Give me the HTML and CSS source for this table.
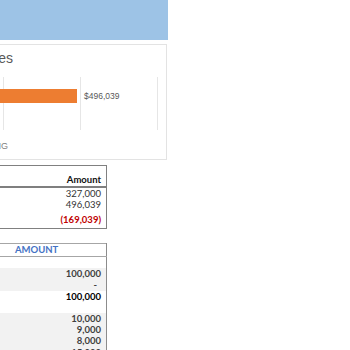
FILE: index.html
```
<!DOCTYPE html>
<html lang="en">
<head>
    <meta charset="UTF-8">
    <meta name="viewport" content="width=device-width, initial-scale=1.0">
    <title>Budget Dashboard</title>
    <link rel="stylesheet" href="styles.css">
</head>
<body>

    <div class="dashboard">
        <div class="banner"></div>

        <div class="chart-card">
            <div class="chart-title">Income vs Expenses</div>
            <div class="plot">
                <div class="bar-row">
                    <div class="bar" style="width: 228px;"></div>
                    <span class="bar-label">$496,039</span>
                </div>
            </div>
            <div class="chart-legend">SPENDING</div>
        </div>

        <table class="summary">
            <thead>
                <tr>
                    <th class="label-col"></th>
                    <th class="num">Amount</th>
                </tr>
            </thead>
            <tbody>
                <tr><td>Total Income</td><td class="num">327,000</td></tr>
                <tr><td>Total Expenses</td><td class="num">496,039</td></tr>
                <tr class="net"><td>Net Balance</td><td class="num negative">(169,039)</td></tr>
            </tbody>
        </table>

        <table class="ledger">
            <colgroup>
                <col class="label-col">
                <col class="amount-col">
            </colgroup>
            <thead>
                <tr>
                    <th>CATEGORY</th>
                    <th class="amount-head">AMOUNT</th>
                </tr>
            </thead>
            <tbody>
                <tr><td>INCOME</td><td></td></tr>
                <tr class="shade"><td>Salary</td><td class="num">100,000</td></tr>
                <tr class="shade"><td>Other Income</td><td class="num dash">-</td></tr>
                <tr class="total"><td>Total Income</td><td class="num">100,000</td></tr>
                <tr><td></td><td></td></tr>
                <tr class="shade"><td>Rent</td><td class="num">10,000</td></tr>
                <tr class="shade"><td>Utilities</td><td class="num">9,000</td></tr>
                <tr class="shade"><td>Groceries</td><td class="num">8,000</td></tr>
                <tr class="shade"><td>Transport</td><td class="num">15,000</td></tr>
            </tbody>
        </table>
    </div>

</body>
</html>
```

FILE: styles.css
```
body {
    margin: 0;
    background-color: #fff;
    font-family: "Liberation Sans", Arial, sans-serif;
    overflow: hidden;
}

.dashboard {
    margin-left: -160px;
    width: 328px;
}

.banner {
    height: 40px;
    background-color: #9dc3e6;
}

/* chart card */
.chart-card {
    box-sizing: border-box;
    margin-top: 4px;
    width: 327px;
    height: 116px;
    border: 1px solid #e3e3e3;
    padding-top: 5px;
}

.chart-title {
    width: 172px;
    text-align: right;
    font-size: 14px;
    line-height: 16px;
    color: #595959;
}

.plot {
    margin-top: 11px;
    margin-left: 8px;
    width: 310px;
    height: 53px;
    background-image: repeating-linear-gradient(to right, #e6e6e6 0, #e6e6e6 1px, transparent 1px, transparent 77px);
}

.bar-row {
    display: flex;
    align-items: center;
    gap: 7px;
    padding-top: 12px;
}

.bar {
    height: 14px;
    background-color: #ed7d31;
}

.bar-label {
    font-size: 8.5px;
    color: #595959;
}

.chart-legend {
    margin-top: 11px;
    width: 167px;
    text-align: right;
    font-size: 9px;
    line-height: 11px;
    color: #7f7f7f;
}

/* tables */
table {
    border-collapse: collapse;
    font-family: Lato, "Liberation Sans", sans-serif;
    font-size: 9.5px;
}

td, th {
    padding: 0 5px 0 0;
    white-space: nowrap;
}

.label-col {
    width: 210px;
}

.num {
    text-align: right;
}

.summary {
    margin-top: 5px;
    width: 267px;
    border: 1px solid #808080;
    color: #333;
}

.summary th {
    height: 20px;
    vertical-align: bottom;
    line-height: 12px;
    border-bottom: 2px solid #7f7f7f;
    color: #111;
    font-weight: bold;
}

.summary td {
    height: 11px;
    line-height: 11px;
}

.summary .net td {
    height: 18px;
}

.negative {
    color: #c00000;
    font-weight: bold;
}

.ledger {
    table-layout: fixed;
    margin-top: 14px;
    width: 267px;
    border-top: 1px solid #a6a6a6;
    border-right: 1px solid #8c8c8c;
    color: #404040;
}

.ledger .label-col {
    width: 170px;
}

.ledger th {
    height: 12px;
    line-height: 12px;
    text-align: left;
    border-bottom: 1px solid #a6a6a6;
    font-weight: bold;
    color: #fff;
}

.ledger .amount-head {
    padding-left: 5px;
    color: #4472c4;
}

.ledger td {
    height: 11.2px;
    line-height: 11px;
    font-weight: bold;
}

.ledger .dash {
    padding-right: 9px;
}

.ledger .shade td {
    background-color: #f2f2f2;
}

.ledger .total td {
    color: #000;
}
```
